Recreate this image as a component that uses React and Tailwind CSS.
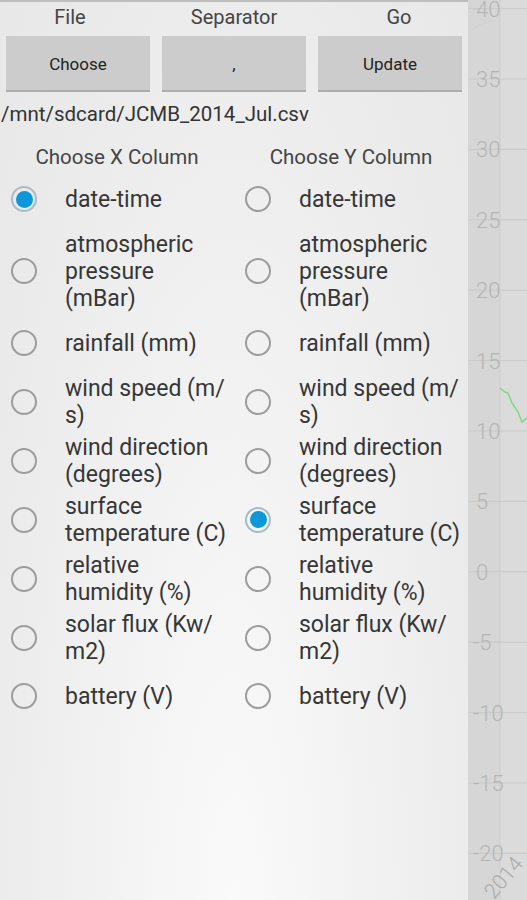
import React from 'react'

const columns = [
  ['date-time'],
  ['atmospheric', 'pressure', '(mBar)'],
  ['rainfall (mm)'],
  ['wind speed (m/', 's)'],
  ['wind direction', '(degrees)'],
  ['surface', 'temperature (C)'],
  ['relative', 'humidity (%)'],
  ['solar flux (Kw/', 'm2)'],
  ['battery (V)'],
]

const ticks = [40, 35, 30, 25, 20, 15, 10, 5, 0, -5, -10, -15, -20]

const Radio = ({ checked }) => (
  <span
    className={`flex h-[26px] w-[26px] shrink-0 items-center justify-center rounded-full border-2 ${
      checked ? 'border-[#a6bcc8]' : 'border-[#9c9c9c]'
    }`}
  >
    {checked && <span className="h-[17px] w-[17px] rounded-full bg-[#0e97d6]" />}
  </span>
)

const Option = ({ lines, checked }) => (
  <div className="flex min-h-[58px] items-center py-[2.5px] pl-[11px]">
    <Radio checked={checked} />
    <div className="ml-[28px] text-[23px] leading-[27px] text-[#363636]">
      {lines.map((l) => (
        <div key={l} className="whitespace-nowrap">{l}</div>
      ))}
    </div>
  </div>
)

const Chart = () => (
  <svg className="h-full w-full" viewBox="0 0 59 900" preserveAspectRatio="none">
    <rect x="0" y="0" width="32" height="900" fill="#d6d6d6" />
    <rect x="32" y="0" width="27" height="900" fill="#dbdbdb" />
    <line x1="32" y1="0" x2="32" y2="900" stroke="#cdcdcd" strokeWidth="1" />
    <path d="M4 30 Q14 22 28 20" fill="none" stroke="#d0d0d0" strokeWidth="1" />
    {ticks.map((t, i) => {
      const y = 8.6 + 70.4 * i
      return (
        <g key={t}>
          <line x1="0" y1={y} x2="59" y2={y} stroke="#c9c9c9" strokeWidth="1" />
          <text x={t < 0 ? 5 : 8} y={y + 8} fontSize="22" fill="#b5b5b5" fontFamily="Roboto, sans-serif" fontWeight="300">
            {t < 0 ? `-${-t}` : t}
          </text>
        </g>
      )
    })}
    <polyline
      points="32,388 37,392 40,393 44,403 50,412 54,422 59,418"
      fill="none"
      stroke="#86d486"
      strokeWidth="1.5"
    />
    <text x="26" y="900" fontSize="21" fill="#aaaaaa" fontFamily="Roboto, sans-serif" fontWeight="300" transform="rotate(-50 26 900)">
      2014
    </text>
  </svg>
)

export default function App() {
  return (
    <div className="flex h-[900px] w-[527px] overflow-hidden font-[family-name:Roboto,sans-serif]">
      {/* left panel */}
      <div className="flex w-[468px] shrink-0 flex-col border-t-2 border-[#bdbdbd] bg-[radial-gradient(ellipse_at_50%_100%,#fafafa_0%,#f3f3f3_35%,#ebebeb_75%,#e8e8e8_100%)]">
        <div className="grid h-[30px] grid-cols-3 items-center text-[20px] text-[#444]">
          <div className="pr-4 text-center">File</div>
          <div className="text-center">Separator</div>
          <div className="pl-[18px] text-center">Go</div>
        </div>

        <div className="mt-1 grid grid-cols-3">
          {['Choose', ',', 'Update'].map((b) => (
            <div key={b} className="px-[6px]">
              <button className="flex h-[56px] w-full items-center justify-center border-b-2 border-[#acacac] bg-[#cccccc] pt-[3px] text-[17px] text-[#222]">
                {b}
              </button>
            </div>
          ))}
        </div>

        <div className="mt-[10px] pl-px text-[20.5px] leading-[24px] text-[#333]">
          /mnt/sdcard/JCMB_2014_Jul.csv
        </div>

        <div className="mt-[19px] grid grid-cols-2 text-[20.5px] leading-[24px] text-[#444]">
          <div className="text-center">Choose X Column</div>
          <div className="text-center">Choose Y Column</div>
        </div>

        <div className="mt-px grid grid-cols-2">
          <div className="flex flex-col">
            {columns.map((c, i) => (
              <Option key={c.join()} lines={c} checked={i === 0} />
            ))}
          </div>
          <div className="flex flex-col">
            {columns.map((c, i) => (
              <Option key={c.join()} lines={c} checked={i === 5} />
            ))}
          </div>
        </div>
      </div>

      {/* chart strip */}
      <div className="h-full flex-1">
        <Chart />
      </div>
    </div>
  )
}
